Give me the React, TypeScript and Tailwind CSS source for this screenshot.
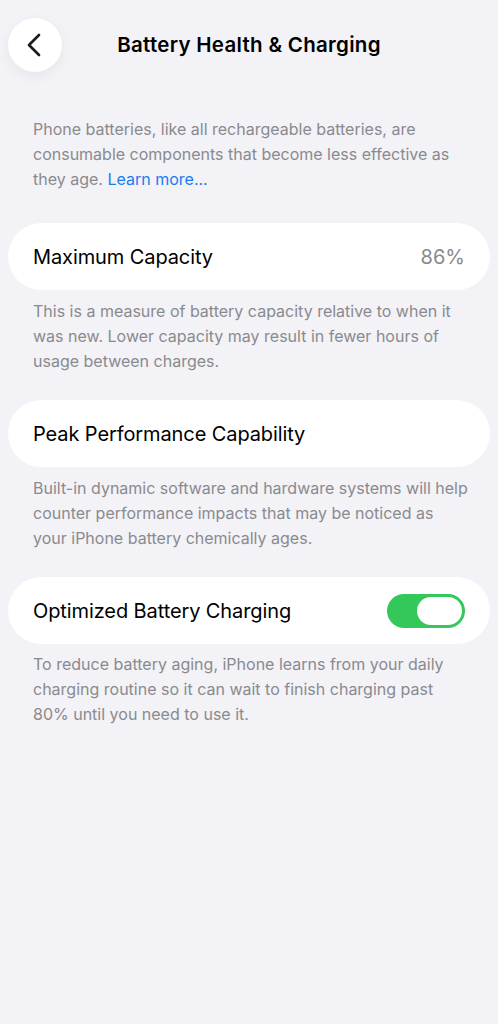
import { ChevronLeft } from "lucide-react";

const font = { fontFamily: "Inter, 'Noto Sans', sans-serif" };

function Row({ label, children }: { label: string; children?: React.ReactNode }) {
  return (
    <div className="mx-2 h-[67px] rounded-full bg-white px-[25px] flex items-center justify-between">
      <span className="text-[20px] text-black tracking-[-0.1px]">{label}</span>
      {children}
    </div>
  );
}

function Footer({ lines }: { lines: string[] }) {
  return (
    <p className="pl-[33px] pr-[20px] text-[16px] leading-[25px] text-[#8a8a8e]">
      {lines.map((l, i) => (
        <span key={i} className="block">{l}</span>
      ))}
    </p>
  );
}

export default function App() {
  return (
    <div className="min-h-[1024px] w-full bg-[#f2f2f7]" style={font}>
      {/* Header */}
      <div className="relative h-[90px] flex items-center justify-center">
        <button className="absolute left-2 top-[18px] w-[54px] h-[54px] rounded-full bg-white shadow-[0_4px_14px_rgba(0,0,0,0.06)] flex items-center justify-center">
          <ChevronLeft className="w-10 h-10 -ml-[2px] text-[#1c1c1e]" strokeWidth={1.6} />
        </button>
        <h1 className="text-[20.5px] font-semibold text-black tracking-[0.3px]">
          Battery Health &amp; Charging
        </h1>
      </div>

      {/* Intro */}
      <p className="mt-[27px] pl-[33px] pr-[20px] text-[16px] leading-[25px] text-[#8a8a8e]">
        <span className="block">Phone batteries, like all rechargeable batteries, are</span>
        <span className="block">consumable components that become less effective as</span>
        <span className="block">
          they age. <span className="text-[#1a7cf0]">Learn more...</span>
        </span>
      </p>

      <div className="mt-[31px]">
        <Row label="Maximum Capacity">
          <span className="text-[20px] text-[#8a8a8e]">86%</span>
        </Row>
        <div className="mt-[9px]">
          <Footer
            lines={[
              "This is a measure of battery capacity relative to when it",
              "was new. Lower capacity may result in fewer hours of",
              "usage between charges.",
            ]}
          />
        </div>
      </div>

      <div className="mt-[26px]">
        <Row label="Peak Performance Capability" />
        <div className="mt-[9px]">
          <Footer
            lines={[
              "Built-in dynamic software and hardware systems will help",
              "counter performance impacts that may be noticed as",
              "your iPhone battery chemically ages.",
            ]}
          />
        </div>
      </div>

      <div className="mt-[26px]">
        <Row label="Optimized Battery Charging">
          <div className="w-[78px] h-[34px] rounded-full bg-[#34c759] p-[3px] flex justify-end">
            <div className="w-[45px] h-[28px] rounded-full bg-white" />
          </div>
        </Row>
        <div className="mt-[8px]">
          <Footer
            lines={[
              "To reduce battery aging, iPhone learns from your daily",
              "charging routine so it can wait to finish charging past",
              "80% until you need to use it.",
            ]}
          />
        </div>
      </div>
    </div>
  );
}
